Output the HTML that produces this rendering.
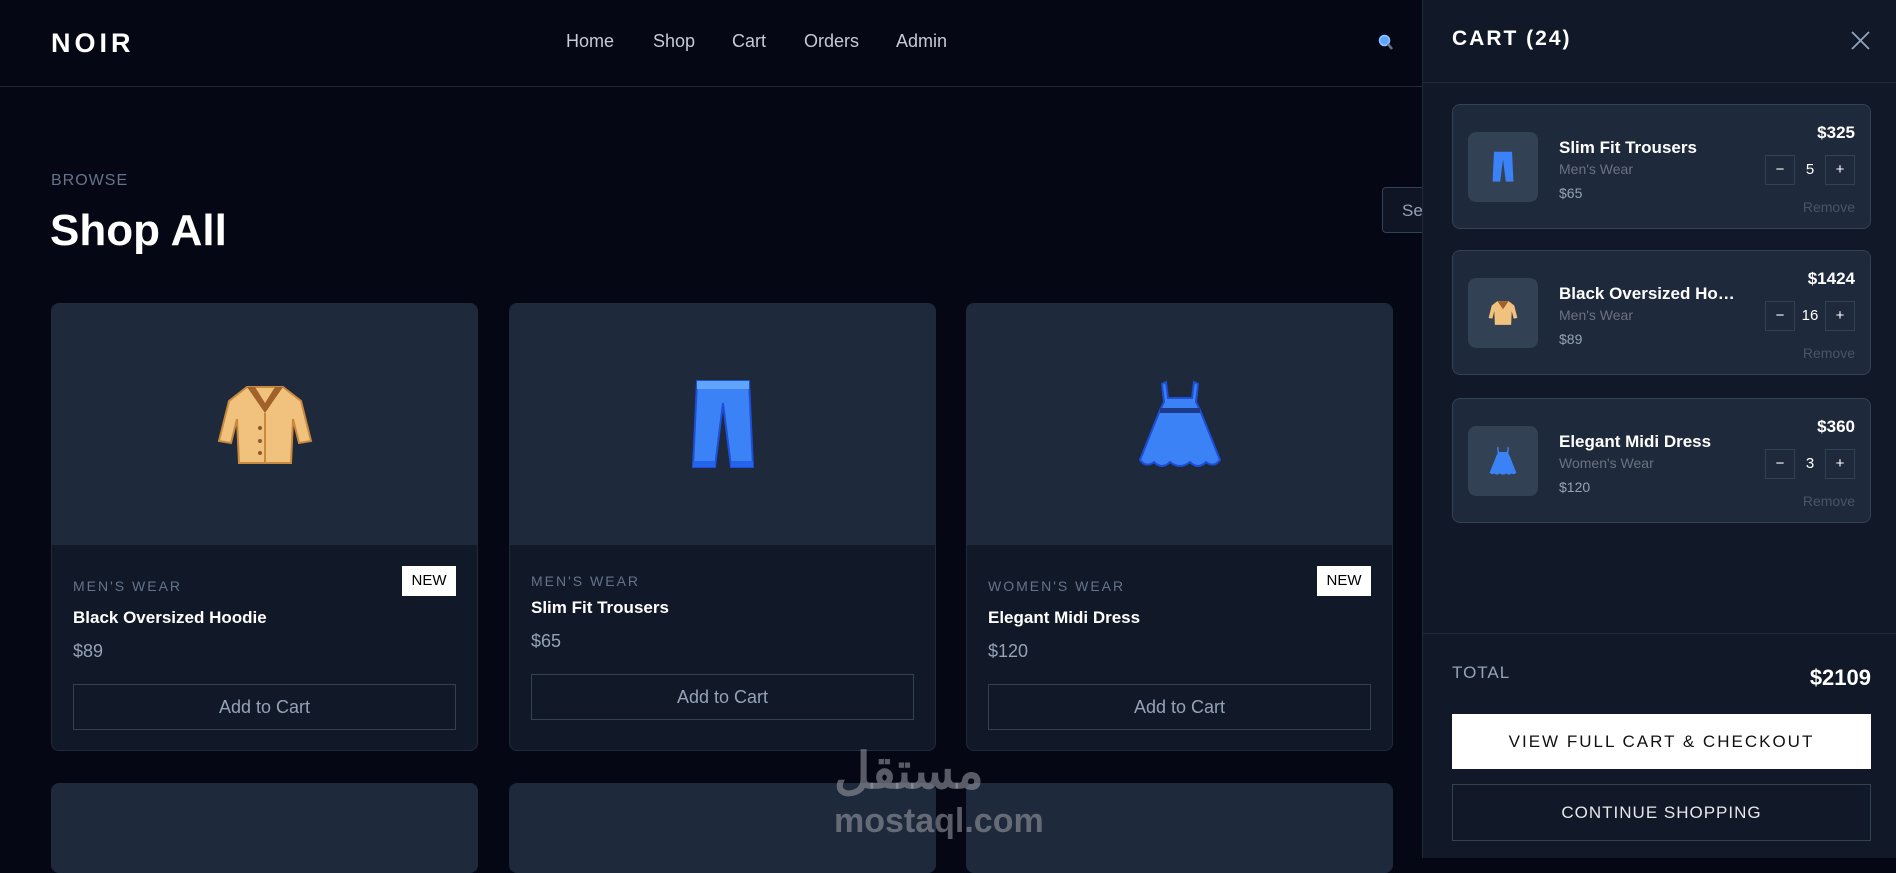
<!DOCTYPE html>
<html><head><meta charset="utf-8"><style>
*{margin:0;padding:0;box-sizing:border-box}
body{width:1896px;height:858px;overflow:hidden;background:#050814;font-family:"Liberation Sans",sans-serif;position:relative;color:#fff}
.a{position:absolute}
.nav a{position:absolute;top:31px;font-size:18px;color:#c4cad6;text-decoration:none}
.card{position:absolute;top:303px;width:427px;height:448px;border:1px solid #1f2a3b;border-radius:8px;overflow:hidden;background:#111827}
.card .img{height:241px;background:#1e293b;display:flex;align-items:center;justify-content:center}
.cat{position:absolute;left:21px;font-size:14px;letter-spacing:2px;color:#64748b}
.nm{position:absolute;left:21px;font-size:17px;font-weight:bold}
.pr{position:absolute;left:21px;font-size:18px;color:#94a3b8}
.btn{position:absolute;left:21px;right:21px;height:46px;border:1px solid #334155;color:#94a3b8;font-size:18px;text-align:center;line-height:44px}
.new{position:absolute;right:21px;width:54px;height:30px;background:#fff;color:#000;font-size:15px;text-align:center;line-height:30px}
.ci{position:absolute;left:1452px;width:419px;height:125px;background:#1e293b;border:1px solid #334155;border-radius:8px}
.ci .th{position:absolute;left:15px;top:27px;width:70px;height:70px;background:#334155;border-radius:8px;display:flex;align-items:center;justify-content:center}
.ci .t{position:absolute;left:106px;top:33px;font-size:17px;font-weight:bold;width:180px;white-space:nowrap;overflow:hidden;text-overflow:ellipsis}
.ci .s{position:absolute;left:106px;top:56px;font-size:14px;color:#6b7280}
.ci .p{position:absolute;left:106px;top:80px;font-size:14px;color:#94a3b8}
.ci .tot{position:absolute;right:15px;top:18px;font-size:17px;font-weight:bold}
.ci .q{position:absolute;right:15px;top:50px;width:90px;height:30px}
.ci .q span{position:absolute;top:0;width:30px;height:30px;border:1px solid #334155;text-align:center;line-height:28px;font-size:15px}
.ci .q b{position:absolute;left:30px;width:30px;text-align:center;line-height:30px;font-weight:normal;font-size:15px}
.ci .r{position:absolute;right:15px;top:94px;font-size:14px;color:#475569}
</style></head><body>
<div class="a" style="left:0;top:0;width:1422px;height:87px;border-bottom:1px solid #1f2937"></div>
<div class="a" style="left:51px;top:28px;font-size:27px;font-weight:bold;letter-spacing:4px">NOIR</div>
<div class="nav"><a style="left:566px">Home</a><a style="left:653px">Shop</a><a style="left:732px">Cart</a><a style="left:804px">Orders</a><a style="left:896px">Admin</a></div>
<svg class="a" style="left:1378px;top:34px" width="16" height="17"><circle cx="6.5" cy="6.5" r="5" fill="#60a5fa" stroke="#93c5fd" stroke-width="1.5"/><line x1="10" y1="10" x2="14" y2="15" stroke="#64748b" stroke-width="2.5"/></svg>
<div class="a" style="left:51px;top:172px;font-size:16px;letter-spacing:1px;color:#64748b">BROWSE</div>
<div class="a" style="left:50px;top:206px;font-size:44px;font-weight:bold">Shop All</div>
<div class="a" style="left:1382px;top:187px;width:60px;height:46px;border:1px solid #334155;border-radius:4px;background:#0f1524;color:#94a3b8;font-size:17px;padding:13px 19px">Se</div>

<div class="card" style="left:51px"><div class="img"><svg width="96" height="84" viewBox="0 0 96 84"><path d="M30 4 L66 4 L84 18 L94 58 L82 60 L76 36 L74 80 L22 80 L20 36 L14 60 L2 58 L12 18 Z" fill="#f1c27d" stroke="#c98a3e" stroke-width="2"/><path d="M30 4 L48 30 L66 4 L58 4 L48 20 L38 4Z" fill="#a0612a"/><line x1="48" y1="30" x2="48" y2="80" stroke="#c98a3e" stroke-width="2"/><circle cx="43" cy="45" r="2" fill="#8b5a2b"/><circle cx="43" cy="58" r="2" fill="#8b5a2b"/><circle cx="43" cy="70" r="2" fill="#8b5a2b"/></svg></div>
<div class="cat" style="top:274px">MEN'S WEAR</div><div class="new" style="top:262px">NEW</div>
<div class="nm" style="top:304px">Black Oversized Hoodie</div><div class="pr" style="top:337px">$89</div><div class="btn" style="top:380px">Add to Cart</div></div>

<div class="card" style="left:509px"><div class="img"><svg width="64" height="92" viewBox="0 0 64 92"><path d="M6 2 L58 2 L62 88 L40 88 L32 24 L24 88 L2 88 Z" fill="#3b82f6" stroke="#1d4ed8" stroke-width="2"/><rect x="6" y="2" width="52" height="8" fill="#60a5fa"/><rect x="2" y="82" width="22" height="6" fill="#2563eb"/><rect x="40" y="82" width="22" height="6" fill="#2563eb"/></svg></div>
<div class="cat" style="top:269px">MEN'S WEAR</div>
<div class="nm" style="top:294px">Slim Fit Trousers</div><div class="pr" style="top:327px">$65</div><div class="btn" style="top:370px">Add to Cart</div></div>

<div class="card" style="left:966px"><div class="img"><svg width="84" height="90" viewBox="0 0 84 90"><path d="M28 2 L30 18 L54 18 L56 2 L60 4 L58 22 L62 30 L82 80 Q76 88 68 82 Q60 90 52 82 Q42 90 32 82 Q24 90 16 82 Q8 88 2 80 L22 30 L26 22 L24 4Z" fill="#3b82f6" stroke="#1d4ed8" stroke-width="2"/><rect x="22" y="28" width="40" height="5" fill="#1e3a8a"/></svg></div>
<div class="cat" style="top:274px">WOMEN'S WEAR</div><div class="new" style="top:262px">NEW</div>
<div class="nm" style="top:304px">Elegant Midi Dress</div><div class="pr" style="top:337px">$120</div><div class="btn" style="top:380px">Add to Cart</div></div>

<div class="a" style="left:51px;top:783px;width:427px;height:90px;background:#1e293b;border-radius:8px"></div>
<div class="a" style="left:509px;top:783px;width:427px;height:90px;background:#1e293b;border-radius:8px"></div>
<div class="a" style="left:966px;top:783px;width:427px;height:90px;background:#1e293b;border-radius:8px"></div>
<div class="a" style="left:834px;top:742px;font-size:50px;font-weight:bold;color:rgba(160,160,170,.55);font-family:'Liberation Sans','Noto Sans CJK SC',sans-serif">مستقل</div>
<div class="a" style="left:834px;top:802px;font-size:34px;font-weight:bold;color:rgba(160,160,170,.55)">mostaql.com</div>

<div class="a" style="left:1422px;top:0;width:474px;height:858px;background:#111827;border-left:1px solid #1f2937"></div>
<div class="a" style="left:1452px;top:27px;font-size:21px;font-weight:bold;letter-spacing:2px">CART (24)</div>
<svg class="a" style="left:1851px;top:31px" width="19" height="19"><path d="M1 1L18 18M18 1L1 18" stroke="#94a3b8" stroke-width="1.8"/></svg>
<div class="a" style="left:1422px;top:82px;width:474px;height:1px;background:#1f2937"></div>

<div class="ci" style="top:104px"><div class="th"><svg width="24" height="32" viewBox="0 0 64 92"><path d="M6 2 L58 2 L62 88 L40 88 L32 24 L24 88 L2 88 Z" fill="#3b82f6"/></svg></div><div class="t">Slim Fit Trousers</div><div class="s">Men's Wear</div><div class="p">$65</div><div class="tot">$325</div><div class="q"><span style="left:0">−</span><b>5</b><span style="left:60px">+</span></div><div class="r">Remove</div></div>
<div class="ci" style="top:250px"><div class="th"><svg width="30" height="28" viewBox="0 0 96 84"><path d="M30 4 L66 4 L84 18 L94 58 L82 60 L76 36 L74 80 L22 80 L20 36 L14 60 L2 58 L12 18 Z" fill="#f1c27d"/><path d="M30 4 L48 30 L66 4Z" fill="#a0612a"/></svg></div><div class="t">Black Oversized Hoodie</div><div class="s">Men's Wear</div><div class="p">$89</div><div class="tot">$1424</div><div class="q"><span style="left:0">−</span><b>16</b><span style="left:60px">+</span></div><div class="r">Remove</div></div>
<div class="ci" style="top:398px"><div class="th"><svg width="28" height="30" viewBox="0 0 84 90"><path d="M28 2 L30 18 L54 18 L56 2 L60 4 L58 22 L62 30 L82 80 Q76 88 68 82 Q60 90 52 82 Q42 90 32 82 Q24 90 16 82 Q8 88 2 80 L22 30 L26 22 L24 4Z" fill="#3b82f6"/></svg></div><div class="t">Elegant Midi Dress</div><div class="s">Women's Wear</div><div class="p">$120</div><div class="tot">$360</div><div class="q"><span style="left:0">−</span><b>3</b><span style="left:60px">+</span></div><div class="r">Remove</div></div>

<div class="a" style="left:1422px;top:633px;width:474px;height:1px;background:#1f2937"></div>
<div class="a" style="left:1452px;top:663px;font-size:17px;color:#94a3b8;letter-spacing:1px">TOTAL</div>
<div class="a" style="right:25px;top:665px;font-size:22px;font-weight:bold">$2109</div>
<div class="a" style="left:1452px;top:714px;width:419px;height:55px;background:#fff;color:#111;font-size:17px;letter-spacing:2px;text-align:center;line-height:55px;font-weight:500">VIEW FULL CART &amp; CHECKOUT</div>
<div class="a" style="left:1452px;top:784px;width:419px;height:57px;border:1px solid #334155;color:#e5e7eb;font-size:17px;letter-spacing:1px;text-align:center;line-height:55px">CONTINUE SHOPPING</div>
</body></html>
